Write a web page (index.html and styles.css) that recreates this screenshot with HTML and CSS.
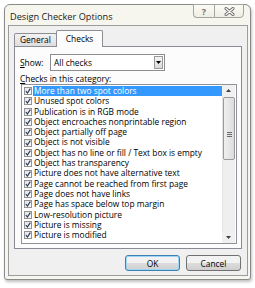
FILE: index.html
```html
<!DOCTYPE html>
<html lang="en">
<head>
  <meta charset="UTF-8" />
  <title>Design Checker Options</title>
  <link rel="stylesheet" href="styles.css">
</head>
<body>
  <div class="dialog">
    <div class="titlebar">
      <span class="title">Design Checker Options</span>
      <div class="caption-btns">
        <span class="cap help">?</span>
        <span class="cap close">
          <svg width="11" height="9" viewBox="0 0 11 9">
            <path d="M2 1.5 L9 7.5 M9 1.5 L2 7.5" stroke="#6d6d6d" stroke-width="3" stroke-linecap="round"/>
            <path d="M2 1.5 L9 7.5 M9 1.5 L2 7.5" stroke="#fbfbf6" stroke-width="1.2" stroke-linecap="round"/>
          </svg>
        </span>
      </div>
    </div>

    <div class="client">
      <div class="tabs">
        <div class="tab">General</div>
        <div class="tab active">Checks</div>
      </div>

      <div class="panel">
        <div class="show-row">
          <span class="label"><u>S</u>how:</span>
          <div class="select">
            <span class="select-text">All checks</span>
            <span class="drop">
              <svg width="5" height="3" viewBox="0 0 5 3"><path d="M0 0 H5 L2.5 3 Z" fill="#000"/></svg>
            </span>
          </div>
        </div>

        <div class="list-label"><u>C</u>hecks in this category:</div>

        <div class="listbox">
          <ul class="items">
            <li class="selected"><span class="check"></span><span class="text">More than two spot colors</span></li>
            <li><span class="check"></span><span class="text">Unused spot colors</span></li>
            <li><span class="check"></span><span class="text">Publication is in RGB mode</span></li>
            <li><span class="check"></span><span class="text">Object encroaches nonprintable region</span></li>
            <li><span class="check"></span><span class="text">Object partially off page</span></li>
            <li><span class="check"></span><span class="text">Object is not visible</span></li>
            <li><span class="check"></span><span class="text">Object has no line or fill / Text box is empty</span></li>
            <li><span class="check"></span><span class="text">Object has transparency</span></li>
            <li><span class="check"></span><span class="text">Picture does not have alternative text</span></li>
            <li><span class="check"></span><span class="text">Page cannot be reached from first page</span></li>
            <li><span class="check"></span><span class="text">Page does not have links</span></li>
            <li><span class="check"></span><span class="text">Page has space below top margin</span></li>
            <li><span class="check"></span><span class="text">Low-resolution picture</span></li>
            <li><span class="check"></span><span class="text">Picture is missing</span></li>
            <li><span class="check"></span><span class="text">Picture is modified</span></li>
          </ul>
          <div class="scrollbar">
            <span class="arrow">
              <svg width="5" height="3" viewBox="0 0 5 3"><path d="M0 3 H5 L2.5 0 Z" fill="#404040"/></svg>
            </span>
            <div class="track">
              <div class="thumb"><span class="grip"></span></div>
            </div>
            <span class="arrow">
              <svg width="5" height="3" viewBox="0 0 5 3"><path d="M0 0 H5 L2.5 3 Z" fill="#404040"/></svg>
            </span>
          </div>
        </div>
      </div>

      <div class="buttons">
        <button class="btn default">OK</button>
        <button class="btn">Cancel</button>
      </div>
    </div>
  </div>
</body>
</html>
```

FILE: styles.css
```css
body {
  margin: 0;
  width: 255px;
  height: 288px;
  background: #fff;
  font-family: "Open Sans", "Noto Sans", sans-serif;
  font-size: 8.4px;
  color: #000;
  overflow: hidden;
}

.dialog {
  margin: 4px 0 0 4px;
  width: 247px;
  height: 276px;
  box-sizing: border-box;
  border: 1px solid #8a8a8a;
  border-radius: 6px 6px 3px 3px;
  background: #f7f6ee;
  box-shadow: 1px 2px 3px rgba(0, 0, 0, 0.25);
  display: flex;
  flex-direction: column;
}

.titlebar {
  height: 20px;
  display: flex;
  align-items: flex-start;
  justify-content: space-between;
}
.title {
  font-size: 9.2px;
  margin: 5px 0 0 5px;
  color: #1a1a1a;
}
.caption-btns {
  display: flex;
  margin-right: 6px;
  margin-top: -1px;
}
.cap {
  height: 14px;
  box-sizing: border-box;
  border: 1px solid #a5a5a0;
  background: linear-gradient(#fbfbf6, #efeee4);
  display: flex;
  align-items: center;
  justify-content: center;
}
.help {
  width: 21px;
  border-right: none;
  border-radius: 0 0 0 4px;
  font-size: 9px;
  font-weight: bold;
  color: #707070;
}
.close {
  width: 30px;
  border-radius: 0 0 4px 0;
}

.client {
  flex: 1;
  margin: 0 2px 3px 3px;
  border: 1px solid #9c9c9c;
  background: #f0f0f0;
  display: flex;
  flex-direction: column;
  padding: 4px 5px 0 5px;
}

.tabs {
  display: flex;
  align-items: flex-end;
  height: 16px;
  position: relative;
  z-index: 1;
}
.tab {
  box-sizing: border-box;
  border: 1px solid #8c8e94;
  border-bottom: none;
  background: linear-gradient(#f2f2f2, #dedede);
  height: 13px;
  padding: 0 5px;
  line-height: 12px;
  border-radius: 2px 2px 0 0;
}
.tab.active {
  height: 17px;
  margin-bottom: -1px;
  margin-left: -1px;
  padding: 0 9px;
  line-height: 15px;
  background: #fcfcfc;
}

.panel {
  height: 203px;
  box-sizing: border-box;
  border: 1px solid #898c95;
  background: #fcfcfc;
  padding: 0 5px 0 6px;
}

.show-row {
  display: flex;
  align-items: center;
  margin-top: 7px;
  height: 17px;
}
.show-row .label {
  width: 30px;
  margin-left: -1px;
}
.select {
  width: 115px;
  height: 17px;
  box-sizing: border-box;
  border: 1px solid #8d8d8d;
  background: #fff;
  display: flex;
  align-items: center;
  justify-content: space-between;
  padding: 0 1px 0 3px;
}
.drop {
  width: 9px;
  height: 13px;
  box-sizing: border-box;
  border: 1px solid #9a9a9a;
  background: linear-gradient(#f4f4f4, #d9d9d9);
  display: flex;
  align-items: center;
  justify-content: center;
}

.list-label {
  margin: 2px 0 0 -1px;
  height: 11px;
  line-height: 11px;
}

.listbox {
  width: 216px;
  height: 160px;
  box-sizing: border-box;
  border: 1px solid #8f9299;
  background: #fff;
  display: flex;
  padding: 1px 1px 1px 2px;
}

.items {
  list-style: none;
  margin: 0;
  padding: 0;
  flex: 1;
}
.items li {
  height: 10.3px;
  display: flex;
  align-items: center;
  white-space: nowrap;
}
.check {
  width: 8px;
  height: 8px;
  box-sizing: border-box;
  border: 1px solid #929292;
  background: linear-gradient(135deg, #e8e8e8, #fdfdfd);
  margin-right: 1px;
  flex: none;
  background-image: url("data:image/svg+xml;utf8,<svg xmlns='http://www.w3.org/2000/svg' width='6' height='6' viewBox='0 0 6 6'><path d='M0.8 3 L2.4 5 L5.3 0.6' fill='none' stroke='%23283a62' stroke-width='1.2'/></svg>"), linear-gradient(135deg, #e4e4e4, #fdfdfd);
  background-repeat: no-repeat;
}
.text {
  flex: 1;
  padding-left: 1px;
  height: 10.3px;
  line-height: 10.3px;
}
.selected .text {
  background: #3399ff;
  color: #fff;
}

.scrollbar {
  width: 13px;
  display: flex;
  flex-direction: column;
  margin: -1px 0;
}
.arrow {
  height: 11px;
  display: flex;
  align-items: center;
  justify-content: center;
  background: #f0f0f0;
}
.track {
  flex: 1;
  background: #efefef;
  border-left: 1px solid #e4e4e4;
  padding-top: 1px;
}
.thumb {
  height: 63px;
  box-sizing: border-box;
  border: 1px solid #9a9a9a;
  border-radius: 2px;
  background: linear-gradient(90deg, #f0f0f0, #dcdcdc);
  display: flex;
  align-items: center;
  justify-content: center;
  padding-top: 12px;
}
.grip {
  width: 5px;
  height: 6px;
  background: repeating-linear-gradient(#6a6a6a 0 1px, transparent 1px 2px);
}

.buttons {
  display: flex;
  justify-content: flex-end;
  gap: 6px;
  margin-top: 6px;
  padding-right: 1px;
}
.btn {
  width: 55px;
  height: 16px;
  box-sizing: border-box;
  border: 1px solid #707070;
  border-radius: 3px;
  background: linear-gradient(#f2f2f2 50%, #dddddd 50%, #cfcfcf);
  font-family: inherit;
  font-size: 8.4px;
  padding: 0;
  color: #000;
}
.btn.default {
  border-color: #3c7fb1;
  box-shadow: inset 0 0 0 1px #9fd6f5;
}
```
